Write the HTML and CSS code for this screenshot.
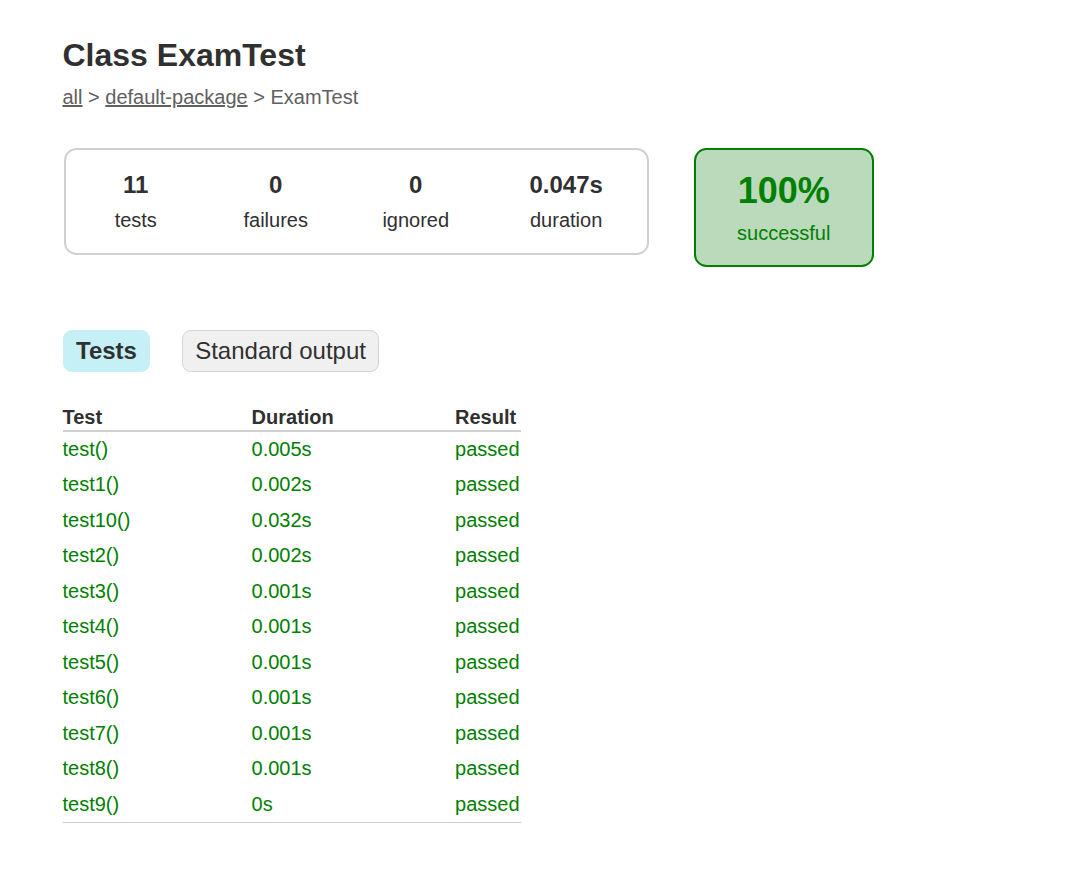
FILE: index.html
```html
<!DOCTYPE html>
<html>
<head>
<meta charset="utf-8">
<title>Test results - Class ExamTest</title>
<link rel="stylesheet" href="styles.css">
</head>
<body>
<div class="content">
  <h1 class="title">Class ExamTest</h1>
  <div class="breadcrumbs">
    <a href="#">all</a> &gt; <a href="#">default-package</a> &gt; ExamTest
  </div>
  <div class="summary">
    <table class="summary-table">
      <tr>
        <td>
          <div class="summary-group">
            <table class="summary-table">
              <tr>
                <td><div class="info-box"><div class="counter">11</div><p>tests</p></div></td>
                <td><div class="info-box"><div class="counter">0</div><p>failures</p></div></td>
                <td><div class="info-box"><div class="counter">0</div><p>ignored</p></div></td>
                <td><div class="info-box info-duration"><div class="counter">0.047s</div><p>duration</p></div></td>
              </tr>
            </table>
          </div>
        </td>
        <td>
          <div class="info-box success-rate success">
            <div class="percent">100%</div>
            <p>successful</p>
          </div>
        </td>
      </tr>
    </table>
  </div>
  <div class="tabs">
    <ul class="tab-links">
      <li class="selected"><h2>Tests</h2></li>
      <li><a href="#">Standard output</a></li>
    </ul>
    <div class="tab">
      <table class="results">
        <thead>
          <tr><th>Test</th><th>Duration</th><th>Result</th></tr>
        </thead>
        <tbody>
          <tr><td class="success">test()</td><td class="success">0.005s</td><td class="success">passed</td></tr>
          <tr><td class="success">test1()</td><td class="success">0.002s</td><td class="success">passed</td></tr>
          <tr><td class="success">test10()</td><td class="success">0.032s</td><td class="success">passed</td></tr>
          <tr><td class="success">test2()</td><td class="success">0.002s</td><td class="success">passed</td></tr>
          <tr><td class="success">test3()</td><td class="success">0.001s</td><td class="success">passed</td></tr>
          <tr><td class="success">test4()</td><td class="success">0.001s</td><td class="success">passed</td></tr>
          <tr><td class="success">test5()</td><td class="success">0.001s</td><td class="success">passed</td></tr>
          <tr><td class="success">test6()</td><td class="success">0.001s</td><td class="success">passed</td></tr>
          <tr><td class="success">test7()</td><td class="success">0.001s</td><td class="success">passed</td></tr>
          <tr><td class="success">test8()</td><td class="success">0.001s</td><td class="success">passed</td></tr>
          <tr><td class="success">test9()</td><td class="success">0s</td><td class="success">passed</td></tr>
        </tbody>
      </table>
    </div>
  </div>
</div>
</body>
</html>
```

FILE: styles.css
```css
html, body {
  margin: 0;
  padding: 0;
  background: #ffffff;
}

body {
  font-family: "Liberation Sans", Arial, sans-serif;
  font-size: 20px;
  color: #303030;
}

a, a:visited {
  color: #303030;
}

.content {
  padding: 37px 62.5px 37.5px 62.5px;
}

.title {
  font-size: 32px;
  font-weight: bold;
  margin: 0 0 11.5px 0;
  white-space: nowrap;
}

.breadcrumbs, .breadcrumbs a {
  color: #606060;
}

.summary {
  margin-top: 38.5px;
  margin-bottom: 49px;
}

.summary-table {
  border-collapse: collapse;
}

.summary-table td {
  vertical-align: top;
  padding: 1.25px;
}

.summary-group {
  border: solid 2px #d0d0d0;
  border-radius: 12.5px;
}

.info-box {
  width: 137.5px;
  padding-top: 19.75px;
  padding-bottom: 19.75px;
  text-align: center;
}

.info-box p {
  margin: 0;
}

.info-duration {
  width: 158.25px;
}

.counter, .percent {
  font-size: 24px;
  font-weight: bold;
  margin-bottom: 10px;
}

.success-rate {
  width: 176px;
  margin-left: 42.75px;
  border: solid 2px #008000;
  border-radius: 12.5px;
  background-color: #bbd9bb;
}

.success-rate .percent {
  font-size: 36px;
}

.success, .success a {
  color: #008000;
}

.tab-links {
  padding: 12.5px 0;
  margin: 20px 0;
  overflow: auto;
  min-width: 1000px;
  list-style: none;
}

.tab-links li {
  float: left;
  list-style: none;
  padding: 6.25px 12.5px;
  border-radius: 8.75px;
  margin-right: 31.25px;
  border: solid 1.25px #d4d4d4;
  background-color: #f0f0f0;
}

.tab-links li.selected {
  background-color: #c5f0f5;
  border-color: #c5f0f5;
}

.tab-links li h2 {
  margin: 0;
  padding: 0;
  font-size: 24px;
  white-space: nowrap;
}

.tab-links a {
  font-size: 24px;
  display: block;
  text-decoration: none;
  margin: 0;
  padding: 0;
}

.results {
  min-width: 437.5px;
  border-collapse: collapse;
  border-bottom: solid #d0d0d0 1.25px;
}

.results th {
  border-bottom: solid #d0d0d0 2px;
  text-align: left;
  white-space: nowrap;
  padding: 1.25px 1.25px 0.75px 120px;
}

.results td {
  white-space: nowrap;
  padding: 6.25px 1.25px 6.25px 120px;
}

.results th:first-child,
.results td:first-child {
  padding-left: 0;
}
```
